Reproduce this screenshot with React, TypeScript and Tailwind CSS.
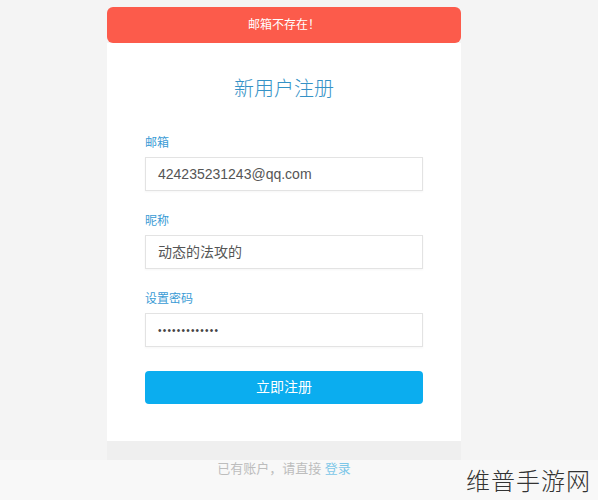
import React from 'react'

const font = { fontFamily: '"Liberation Sans", "Noto Sans CJK SC", sans-serif' }

function Field({ label, children }: { label: string; children: React.ReactNode }) {
  return (
    <div className="flex flex-col">
      <label className="h-4 text-[12px] leading-4 text-[#3a9bd5]">{label}</label>
      <div className="mt-[6px] h-[34px] flex items-center px-3 bg-white border border-[#e3e3e3] shadow-[0_1px_2px_rgba(0,0,0,0.04)] text-[14px] text-[#555]">
        {children}
      </div>
    </div>
  )
}

export default function App() {
  return (
    <div className="h-[500px] w-[598px] flex flex-col bg-[#f4f4f4] overflow-hidden" style={font}>
      <div className="flex-1 flex">
        <div className="ml-[107px] w-[354px] flex flex-col pt-[7px]">
          {/* alert */}
          <div className="h-[36px] rounded-md bg-[#fc5b4b] flex items-center justify-center text-[12px] text-white">
            邮箱不存在！
          </div>

          {/* card body */}
          <div className="bg-white px-[38px] pt-[32px] pb-[37px] flex flex-col">
            <h1 className="h-7 text-center text-[20px] leading-7 text-[#3592c6] font-light">新用户注册</h1>
            <div className="mt-8 flex flex-col gap-[22px]">
              <Field label="邮箱">424235231243@qq.com</Field>
              <Field label="昵称">动态的法攻的</Field>
              <Field label="设置密码">
                <span className="text-[10px] tracking-[1.2px] text-[#444]">•••••••••••••</span>
              </Field>
            </div>
            <button className="mt-6 h-[33px] bg-[#0badef] text-white text-[14px] rounded-sm">立即注册</button>
          </div>

          {/* card footer */}
          <div className="flex-1 bg-[#efefef]" />
        </div>
      </div>

      {/* bottom band */}
      <div className="h-[40px] flex items-center bg-[#f8f8f8]">
        <div className="ml-[107px] w-[354px] text-center text-[13px] text-[#bdbdbd] -mt-[22px]">
          已有账户，请直接 <span className="text-[#7cc7e8]">登录</span>
        </div>
        <div className="ml-auto mr-[7px] text-[24px] font-light text-[#333] tracking-[1px]" style={{ fontFamily: '"Noto Sans CJK SC", sans-serif' }}>
          维普手游网
        </div>
      </div>
    </div>
  )
}
